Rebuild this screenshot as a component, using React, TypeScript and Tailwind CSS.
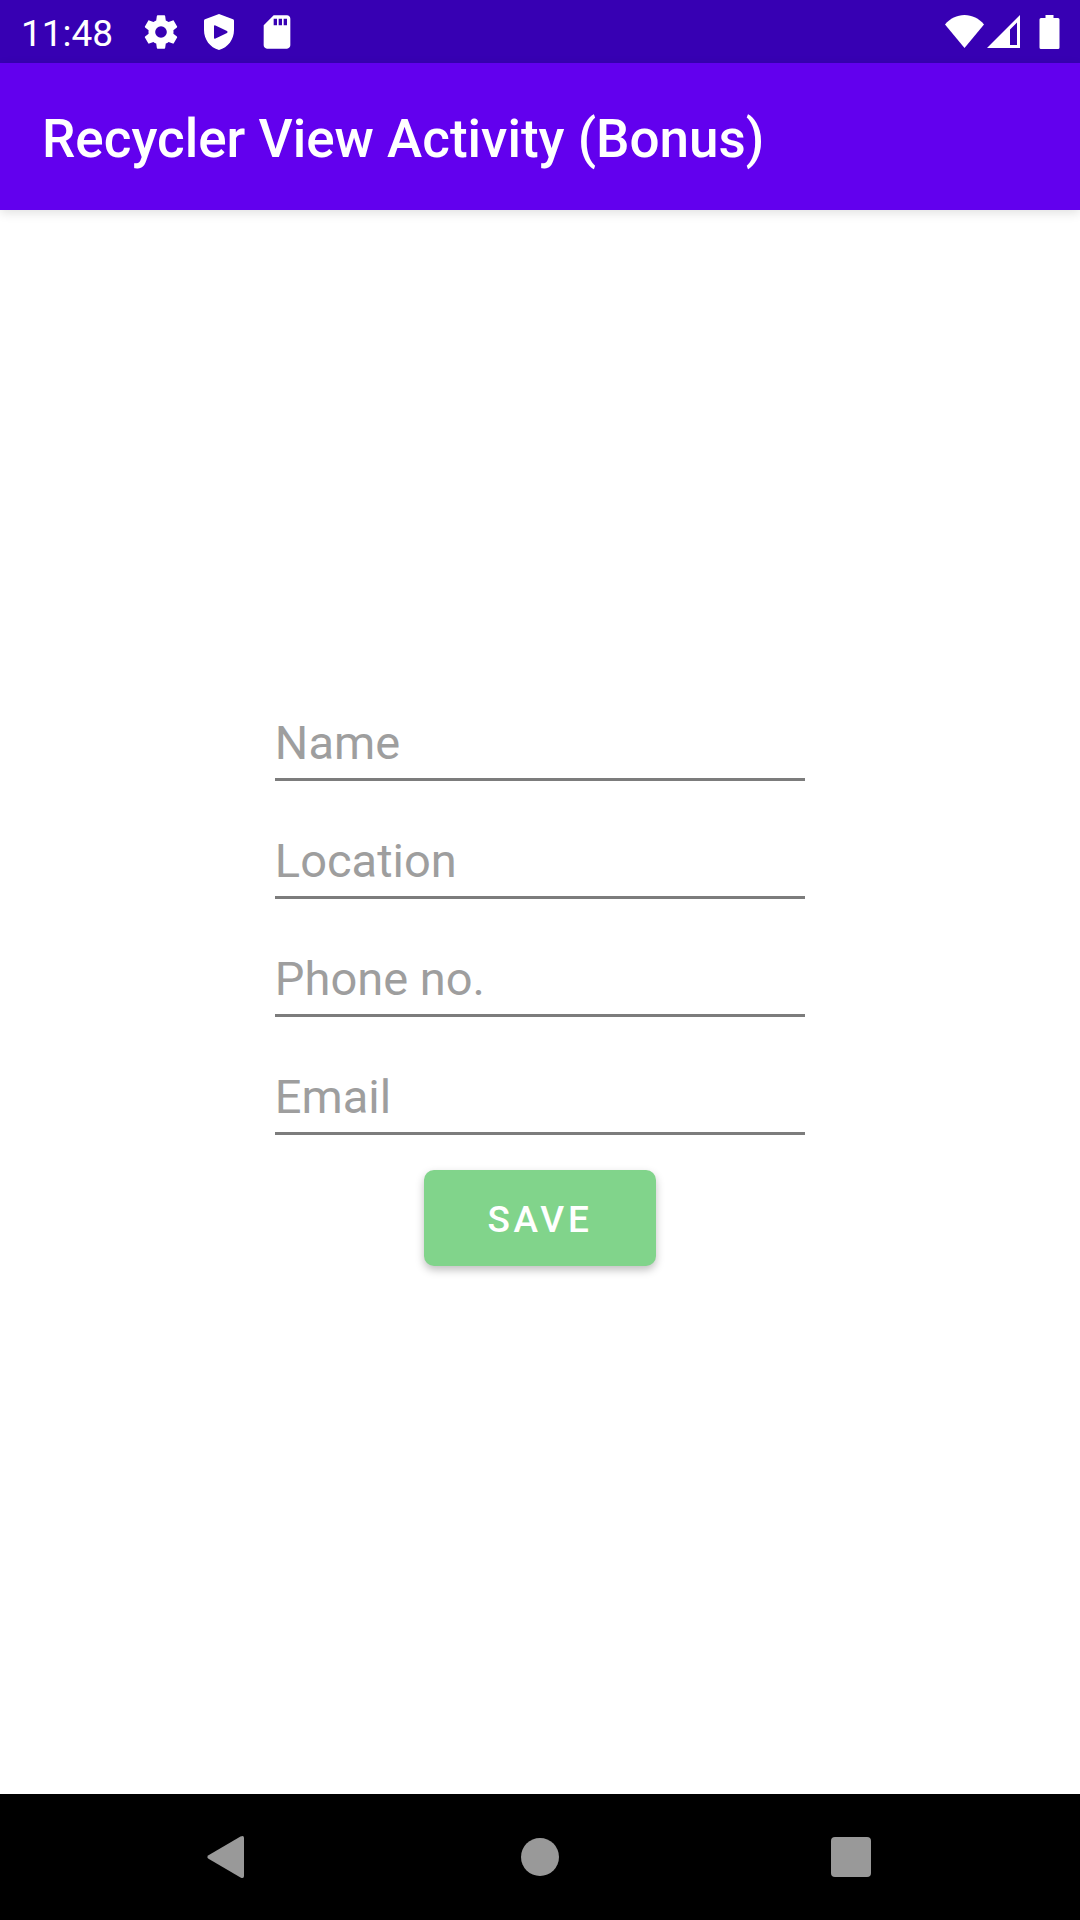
import type { InputHTMLAttributes } from "react";

type FieldProps = InputHTMLAttributes<HTMLInputElement> & { id: string; label: string };

function Field({ id, label, ...rest }: FieldProps) {
  return (
    <div className="flex h-[118px] flex-col justify-end">
      <input
        id={id}
        name={id}
        aria-label={label}
        placeholder={label}
        className="h-20 w-full border-b-3 border-[#7c7c7c] bg-transparent pt-1.5 text-[47px] text-[#212121] outline-none placeholder:text-[#9e9e9e] focus:border-[#6200ee]"
        {...rest}
      />
    </div>
  );
}

function StatusBar() {
  return (
    <div className="flex h-[63px] items-center justify-between bg-[#3700b3] pr-[19px] pl-[21px] text-white">
      <div className="flex items-center">
        <time className="w-[120px] pt-1 text-[37px] leading-10">11:48</time>
        <div className="flex items-center gap-[18px]">
          <svg viewBox="0 0 24 24" className="size-10" fill="currentColor" aria-hidden="true">
            <path d="M19.43 12.98c.04-.32.07-.64.07-.98s-.03-.66-.07-.98l2.11-1.65c.19-.15.24-.42.12-.64l-2-3.46c-.12-.22-.39-.3-.61-.22l-2.49 1c-.52-.4-1.08-.73-1.69-.98l-.38-2.65A.49.49 0 0 0 14 2h-4c-.25 0-.46.18-.49.42l-.38 2.65c-.61.25-1.17.59-1.69.98l-2.49-1c-.23-.09-.49 0-.61.22l-2 3.46c-.13.22-.07.49.12.64l2.11 1.65c-.04.32-.07.65-.07.98s.03.66.07.98l-2.11 1.65c-.19.15-.24.42-.12.64l2 3.46c.12.22.39.3.61.22l2.49-1c.52.4 1.08.73 1.69.98l.38 2.65c.03.24.24.42.49.42h4c.25 0 .46-.18.49-.42l.38-2.65c.61-.25 1.17-.59 1.69-.98l2.49 1c.23.09.49 0 .61-.22l2-3.46c.12-.22.07-.49-.12-.64l-2.11-1.65zM12 15.5a3.5 3.5 0 1 1 0-7 3.5 3.5 0 0 1 0 7z" />
          </svg>
          <svg viewBox="0 0 40 40" className="size-10" fill="currentColor" aria-hidden="true">
            <path
              fillRule="evenodd"
              d="M20 2 34 7.300Q35 7.700 35 8.800V18C35 27.500 29 35.500 20 38C11 35.500 5 27.500 5 18V8.800Q5 7.700 6 7.300ZM15 14.300V25.700Q15 27.400 16.500 26.600L28 20.900Q29.300 20 28 19.100L16.500 13.400Q15 12.600 15 14.300Z"
            />
          </svg>
          <svg viewBox="0 0 24 24" className="size-10" fill="currentColor" aria-hidden="true">
            <path d="M18 2h-8L4.020 8 4 20c0 1.100.9 2 2 2h12c1.100 0 2-.9 2-2V4c0-1.100-.9-2-2-2zm-6 6h-2V4h2v4zm3 0h-2V4h2v4zm3 0h-2V4h2v4z" />
          </svg>
        </div>
      </div>
      <div className="flex items-center">
        <svg viewBox="0 0 40 34" className="h-[34px] w-10" fill="currentColor" aria-label="Wi-Fi" role="img">
          <path d="M0 9.500C5 3.500 12 0 19.500 0S34 3.500 39 9.500L19.500 33Z" />
        </svg>
        <svg viewBox="0 0 34 34" className="ml-[2px] size-[34px]" fill="currentColor" aria-label="Mobile signal" role="img">
          <path fillRule="evenodd" d="M33 0V33H0ZM30 7.500 23 14.500V30H30Z" />
        </svg>
        <svg viewBox="0 0 22 34" className="ml-[18px] h-[34px] w-[22px]" fill="currentColor" aria-label="Battery" role="img">
          <path d="M6.500 0H14.500V3H19Q20.500 3 20.500 4.500V32.500Q20.500 34 19 34H2Q.5 34 .5 32.500V4.500Q.5 3 2 3H6.500Z" />
        </svg>
      </div>
    </div>
  );
}

function NavigationBar() {
  return (
    <nav className="bg-black text-[#999999]">
      <div className="mx-auto grid h-[126px] w-[86.4%] grid-cols-3 place-items-center">
        <button type="button" aria-label="Back" className="p-3">
          <svg viewBox="0 0 48 48" className="size-12" fill="currentColor" aria-hidden="true">
            <path d="M3.500 22.200 35.500 3.500Q39 1.800 39 5V43Q39 46.200 35.500 44.500L3.500 25.800Q1.200 24 3.500 22.200Z" />
          </svg>
        </button>
        <button type="button" aria-label="Home" className="p-3">
          <svg viewBox="0 0 48 48" className="size-12" fill="currentColor" aria-hidden="true">
            <circle cx="24" cy="24" r="19" />
          </svg>
        </button>
        <button type="button" aria-label="Recent apps" className="p-3">
          <svg viewBox="0 0 48 48" className="size-12" fill="currentColor" aria-hidden="true">
            <rect x="4" y="4" width="40" height="40" rx="4" />
          </svg>
        </button>
      </div>
    </nav>
  );
}

export default function App() {
  return (
    <div className="flex min-h-screen flex-col bg-white font-[Roboto,sans-serif]">
      <StatusBar />
      <header className="flex h-[147px] items-center bg-[#6200ee] px-[42px] pt-1.5 shadow-[0_3px_10px_rgba(0,0,0,0.12)]">
        <h1 className="text-[53px] font-medium text-white">Recycler View Activity (Bonus)</h1>
      </header>
      <main className="flex flex-1 flex-col items-center pt-[453px]">
        <form className="flex w-[49.1%] flex-col" onSubmit={(e) => e.preventDefault()}>
          <Field id="name" label="Name" type="text" />
          <Field id="location" label="Location" type="text" />
          <Field id="phone" label="Phone no." type="tel" />
          <Field id="email" label="Email" type="email" />
          <button
            type="submit"
            className="mt-[35px] h-24 self-center rounded-[10px] bg-[#81d48b] px-[63px] pt-1 text-[37px] font-medium tracking-widest text-white shadow-[0_4px_8px_rgba(0,0,0,0.25)]"
          >
            SAVE
          </button>
        </form>
      </main>
      <NavigationBar />
    </div>
  );
}
